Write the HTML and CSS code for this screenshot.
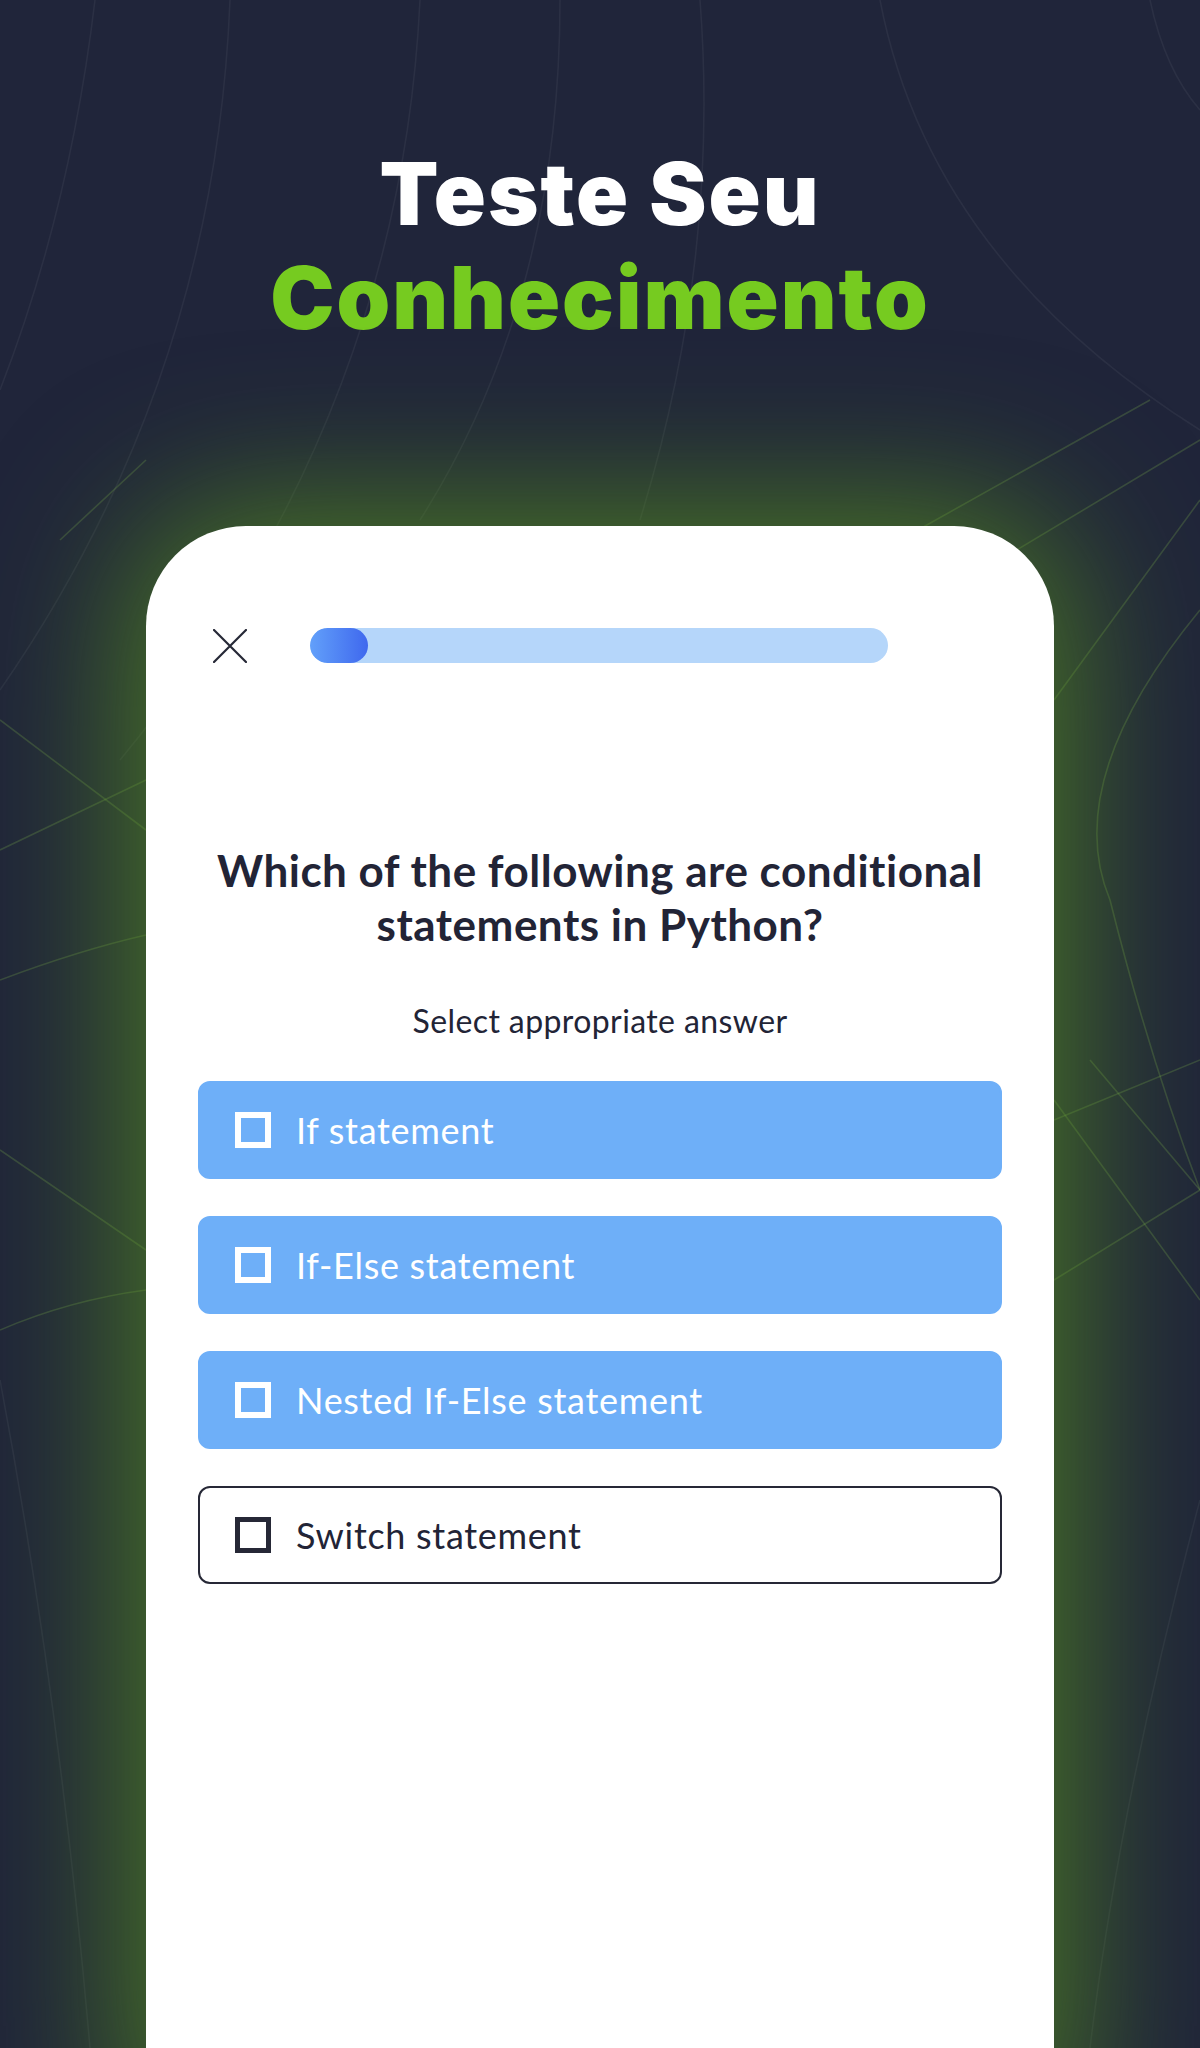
FILE: index.html
```html
<!DOCTYPE html>
<html lang="en">
<head>
    <meta charset="UTF-8">
    <meta name="viewport" content="width=device-width, initial-scale=1.0">
    <title>Teste Seu Conhecimento</title>
    <link rel="stylesheet" href="styles.css">
</head>
<body>
    <svg class="bg-lines" viewBox="0 0 1200 2048" preserveAspectRatio="none" aria-hidden="true">
        <g class="line-dim">
            <path d="M95 0 Q70 210 0 390"/>
            <path d="M230 0 Q215 380 0 690"/>
            <path d="M420 0 Q400 420 120 760"/>
            <path d="M560 0 Q560 300 420 520"/>
            <path d="M700 0 Q720 260 640 520"/>
            <path d="M880 0 Q930 260 1200 430"/>
            <path d="M1150 0 Q1165 70 1200 110"/>
            <path d="M0 1380 Q60 1700 90 2048"/>
            <path d="M1200 1500 Q1120 1800 1090 2048"/>
        </g>
        <g class="line-glow">
            <path d="M900 540 L1150 400"/>
            <path d="M1000 560 L1200 440"/>
            <path d="M1054 700 L1200 500"/>
            <path d="M1200 610 Q1060 780 1110 900 Q1150 1060 1200 1190"/>
            <path d="M1054 1120 L1200 1060"/>
            <path d="M1054 1280 L1200 1190"/>
            <path d="M1090 1060 L1200 1190"/>
            <path d="M1054 1100 L1200 1300"/>
            <path d="M0 720 L146 830"/>
            <path d="M0 850 L146 780"/>
            <path d="M0 980 Q80 950 146 935"/>
            <path d="M0 1330 Q70 1300 146 1290"/>
            <path d="M0 1150 L146 1250"/>
            <path d="M60 540 L146 460"/>
        </g>
    </svg>

    <header class="hero">
        <h1>
            <span class="hero-line">Teste Seu</span>
            <span class="hero-line accent">Conhecimento</span>
        </h1>
    </header>

    <main class="phone">
        <div class="quiz-top">
            <button class="close-btn" aria-label="Close">
                <svg width="34" height="34" viewBox="0 0 34 34">
                    <path d="M1 1 L33 33 M33 1 L1 33" stroke="#262836" stroke-width="2.2" stroke-linecap="round" fill="none"/>
                </svg>
            </button>
            <div class="progress">
                <div class="progress-fill" style="width: 10%;"></div>
            </div>
        </div>

        <h2 class="question">Which of the following are conditional<br>statements in Python?</h2>
        <p class="hint">Select appropriate answer</p>

        <ul class="options">
            <li class="option selected"><span class="check"></span>If statement</li>
            <li class="option selected"><span class="check"></span>If-Else statement</li>
            <li class="option selected"><span class="check"></span>Nested If-Else statement</li>
            <li class="option"><span class="check"></span>Switch statement</li>
        </ul>
    </main>
</body>
</html>
```

FILE: styles.css
```css
body {
    margin: 0;
    height: 2048px;
    overflow: hidden;
    position: relative;
    background-color: #20253a;
    font-family: Lato, "Noto Sans", sans-serif;
}
.bg-lines {
    position: absolute;
    left: 0;
    top: 0;
    width: 1200px;
    height: 2048px;
    z-index: 0;
}
.bg-lines path {
    fill: none;
    stroke-width: 1.6;
}
.line-dim path {
    stroke: rgba(255, 255, 255, 0.05);
}
.line-glow path {
    stroke: rgba(140, 200, 80, 0.22);
}
.hero {
    position: relative;
    z-index: 1;
    text-align: center;
}
.hero h1 {
    margin: 142px 0 0;
    font-family: Inter, Roboto, "Liberation Sans", sans-serif;
    font-weight: 900;
    font-size: 86px;
    line-height: 104px;
    letter-spacing: 2px;
    color: #ffffff;
}
.hero-line {
    display: block;
}
.accent {
    color: #76cb20;
}
.phone {
    position: relative;
    z-index: 1;
    width: 908px;
    min-height: 1600px;
    margin: 176px auto 0;
    padding: 102px 52px 0;
    box-sizing: border-box;
    background: #ffffff;
    border-radius: 100px 100px 0 0;
    box-shadow: 0 0 150px 20px rgba(90, 150, 30, 0.75);
}
.quiz-top {
    display: flex;
    align-items: center;
    gap: 63px;
    padding: 0 114px 0 15px;
}
.close-btn {
    width: 34px;
    height: 34px;
    padding: 0;
    border: none;
    background: none;
    cursor: pointer;
}
.close-btn svg {
    display: block;
}
.progress {
    flex: 1;
    height: 35px;
    border-radius: 18px;
    background-color: #b5d6fa;
    overflow: hidden;
}
.progress-fill {
    height: 100%;
    border-radius: 18px;
    background: linear-gradient(90deg, #62a0fa, #3f68ee);
}
.question {
    margin: 180px 0 0;
    text-align: center;
    font-size: 44px;
    line-height: 54px;
    font-weight: 700;
    letter-spacing: 0.5px;
    color: #222436;
}
.hint {
    margin: 50px 0 0;
    text-align: center;
    font-size: 32px;
    line-height: 40px;
    letter-spacing: 0.4px;
    color: #222436;
}
.options {
    list-style: none;
    margin: 40px 0 0;
    padding: 0;
    display: flex;
    flex-direction: column;
    gap: 37px;
}
.option {
    display: flex;
    align-items: center;
    gap: 25px;
    height: 98px;
    box-sizing: border-box;
    padding: 0 35px;
    border-radius: 12px;
    border: 2.5px solid #262836;
    font-size: 36px;
    letter-spacing: 0.7px;
    color: #222436;
}
.option .check {
    width: 36px;
    height: 36px;
    box-sizing: border-box;
    border: 5px solid #262836;
    flex-shrink: 0;
}
.option.selected {
    background-color: #6eaff8;
    border-color: #6eaff8;
    color: #ffffff;
}
.option.selected .check {
    border: 6px solid #ffffff;
}
```
